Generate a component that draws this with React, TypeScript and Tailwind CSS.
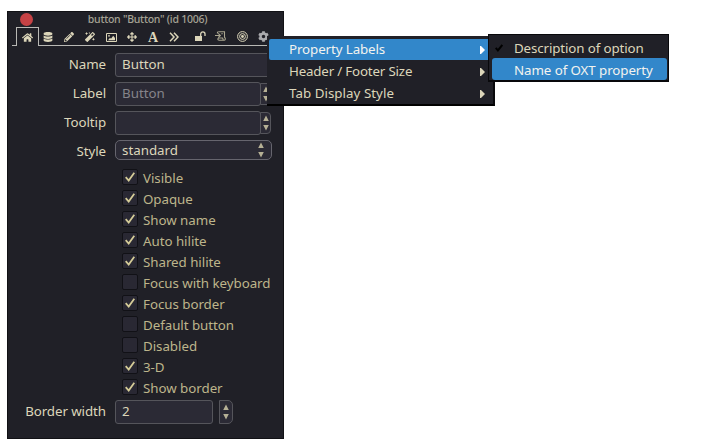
import React from "react";
import { FaHome, FaDatabase, FaPencilAlt, FaMagic, FaArrowsAlt, FaCog } from "react-icons/fa";

const checks: [string, boolean][] = [
  ["Visible", true],
  ["Opaque", true],
  ["Show name", true],
  ["Auto hilite", true],
  ["Shared hilite", true],
  ["Focus with keyboard", false],
  ["Focus border", true],
  ["Default button", false],
  ["Disabled", false],
  ["3-D", true],
  ["Show border", true],
];

function Slot({ children }: { children: React.ReactNode }) {
  return <span className="flex h-[18px] w-[21px] shrink-0 items-center justify-center">{children}</span>;
}

function Arrows() {
  return (
    <svg width="6" height="16" viewBox="0 0 6 16" fill="#b5b095" className="shrink-0">
      <path d="M3 .5 5.8 6H.2zM3 15.5.2 10h5.6z" />
    </svg>
  );
}

function Stepper({ tall = false }: { tall?: boolean }) {
  return (
    <span
      className={
        tall
          ? "ml-[6px] flex h-[24px] w-[14px] items-center justify-center rounded-r-[5px] border border-[#55555b] bg-[#2b2a35]"
          : "-ml-px mt-px flex h-[22px] w-[11px] items-center justify-center rounded-r-[4px] border border-[#55555b] bg-[#2b2a35]"
      }
    >
      <Arrows />
    </span>
  );
}

function Row({ label, children }: { label: string; children: React.ReactNode }) {
  return (
    <div className="flex h-[29px] items-start">
      <span className="mr-[9px] w-[98px] shrink-0 text-right leading-[23px] tracking-[-0.08px] text-[#dcd6ba]">{label}</span>
      {children}
    </div>
  );
}

const field = "h-[24px] rounded-[3px] border border-[#55555b] bg-[#2b2a35] pl-[6px] leading-[21px]";

function MenuArrow({ color }: { color: string }) {
  return (
    <svg width="5" height="8" viewBox="0 0 5 8" fill={color} className="ml-auto">
      <path d="M0 0h1l4 4-4 4H0z" />
    </svg>
  );
}

export default function App() {
  return (
    <div className="relative h-[448px] w-[710px] overflow-hidden bg-white font-['Noto_Sans',sans-serif] text-[13.333px] text-[#dcd6ba]">
      <div className="absolute left-[7px] top-[11px] h-[428px] w-[277px] overflow-hidden border border-[#111115] bg-[#202027]">
        <div className="relative flex h-[15px] items-center justify-center text-[10.5px] font-medium leading-[14px] text-[#a5a294]">
          <span className="absolute left-[12px] top-[1px] h-[13px] w-[13px] rounded-full bg-[#c64245]" />
          <span className="-mt-[2px] ml-[4px] whitespace-nowrap tracking-[-0.25px]">button "Button" (id 1006)</span>
        </div>

        <div className="flex h-[19px] text-[#dcd6ba]">
          <span className="ml-[4px] w-[4px] border-b border-[#b9b9b5]" />
          <span className="flex w-[23px] items-center justify-center border-x border-t border-[#b9b9b5]">
            <FaHome size={11} />
          </span>
          <div className="flex flex-1 border-b border-[#b9b9b5]">
            <div className="-ml-[1.5px] flex pt-px">
              <Slot><FaDatabase size={10} /></Slot>
              <Slot><FaPencilAlt size={10} /></Slot>
              <Slot><FaMagic size={10} /></Slot>
              <Slot>
                <svg width="11" height="9" viewBox="0 0 11 9">
                  <path d="M.5.5h10v8H.5z" fill="none" stroke="currentColor" />
                  <path d="m2 7.3 2-2.6 1 1 2.2-3L9 5v2.3z" fill="currentColor" />
                  <circle cx="3" cy="2.8" r=".9" fill="currentColor" />
                </svg>
              </Slot>
              <Slot><FaArrowsAlt size={10} /></Slot>
              <Slot><span className="mt-[2px] font-['Liberation_Serif',serif] text-[14px] font-bold leading-none">A</span></Slot>
              <Slot>
                <svg width="10" height="10" viewBox="0 0 10 10" fill="none" stroke="currentColor" strokeWidth="1.5">
                  <path d="m1 .8 4 4.2-4 4.2M5 .8 9 5 5 9.2" />
                </svg>
              </Slot>
            </div>
            <span className="w-[5px]" />
            <div className="flex">
              <Slot>
                <svg width="11" height="10" viewBox="0 0 11 10">
                  <path d="M0 5h7v5H0z" fill="currentColor" />
                  <path d="M5.7 5V3a2.1 2.1 0 0 1 4.3 0v2" fill="none" stroke="currentColor" strokeWidth="1.3" />
                </svg>
              </Slot>
              <Slot>
                <svg width="12" height="10" viewBox="0 0 12 10" fill="none" stroke="#aaa690" strokeWidth="1.1">
                  <path d="M3.5.7h6v5.6c1.2.8 1.1 2.6-.2 2.9H4.2C2.3 9.2 2.5 7 4 7h3.5l.8 1.8" />
                  <path d="M0 4.5h5.4M3.2 2.3l2.2 2.2-2.2 2.2" />
                  <path d="M3.5.7c-1 0-1.2 1-1 1.8M6.3 2.8h1.5" />
                </svg>
              </Slot>
              <Slot>
                <svg width="11" height="11" viewBox="0 0 11 11" fill="none" stroke="currentColor">
                  <circle cx="5.5" cy="5.5" r="4.9" /><circle cx="5.5" cy="5.5" r="2.9" />
                  <circle cx="5.5" cy="5.5" r="1.4" fill="currentColor" stroke="none" />
                </svg>
              </Slot>
              <Slot><FaCog size={11} color="#aaaaad" /></Slot>
            </div>
          </div>
        </div>

        <div className="mt-[7px]">
          <Row label="Name"><span className={`${field} w-[157px]`}>Button</span></Row>
          <Row label="Label"><span className={`${field} w-[146px] text-[#85848a]`}>Button</span><Stepper /></Row>
          <Row label="Tooltip"><span className={`${field} w-[146px]`} /><Stepper /></Row>
          <Row label="Style">
            <span className="flex h-[20px] w-[157px] items-center justify-between rounded-[5px] border border-[#66656e] bg-[#2b2a35] pl-[6px] pr-[7px]">
              <span className="leading-[18px]">standard</span><Arrows />
            </span>
          </Row>
        </div>

        <div className="ml-[114px] text-[#bdb58b]">
          {checks.map(([name, on]) => (
            <div key={name} className="flex h-[21px] items-start">
              <span className="flex h-[16px] w-[16px] items-center justify-center rounded-[2px] border border-[#111116] bg-[#292833]">
                {on && (
                  <svg width="10" height="10" viewBox="0 0 10 10" fill="none" stroke="#d5cc98" strokeWidth="1.8">
                    <path d="m.7 5.2 3 3.3L9.3.8" />
                  </svg>
                )}
              </span>
              <span className="ml-[5px] whitespace-nowrap leading-[19px] tracking-[-0.04px]">{name}</span>
            </div>
          ))}
        </div>

        <Row label="Border width"><span className={`${field} w-[98px]`}>2</span><Stepper tall /></Row>
      </div>

      <div className="absolute left-[267px] top-[36px] h-[70px] w-[228px] border-b-2 border-r-2 border-b-black border-r-[#08080b] bg-[#202027] pl-[2px] pt-[3px] tracking-[-0.1px]">
        <div className="flex h-[21px] items-center rounded-[2px] bg-[#3287ca] pl-[20px] pr-[8px] leading-[20px] text-[#f2f3ef]"><span className="-mt-px">Property Labels</span><MenuArrow color="#ffffff" /></div>
        <div className="flex h-[22px] items-center pl-[20px] pr-[8px] pt-[2px]"><span className="tracking-[-0.18px]">Header / Footer Size</span><MenuArrow color="#dcd6ba" /></div>
        <div className="flex h-[22px] items-center pl-[20px] pr-[8px] pt-[2px]"><span className="tracking-[0.04px]">Tab Display Style</span><MenuArrow color="#dcd6ba" /></div>
      </div>

      <div className="absolute left-[488px] top-[34px] h-[48px] w-[181px] border border-b-2 border-[#08080b] bg-[#202027] pl-[3px] pr-px pt-[3px] tracking-[-0.12px]">
        <div className="flex h-[20px] items-center pl-[3px]">
          <svg width="8" height="8" viewBox="0 0 8 8" fill="none" stroke="#000" strokeWidth="2"><path d="m.7 3.8 2.2 2.6L7.3 1" /></svg>
          <span className="ml-[11px] pt-[2px]">Description of option</span>
        </div>
        <div className="flex h-[22px] items-center rounded-[3px] bg-[#3287ca] pl-[22px] leading-[20px] text-[#f2f3ef]"><span className="pt-[2px] tracking-[-0.08px]">Name of OXT property</span></div>
      </div>
    </div>
  );
}
